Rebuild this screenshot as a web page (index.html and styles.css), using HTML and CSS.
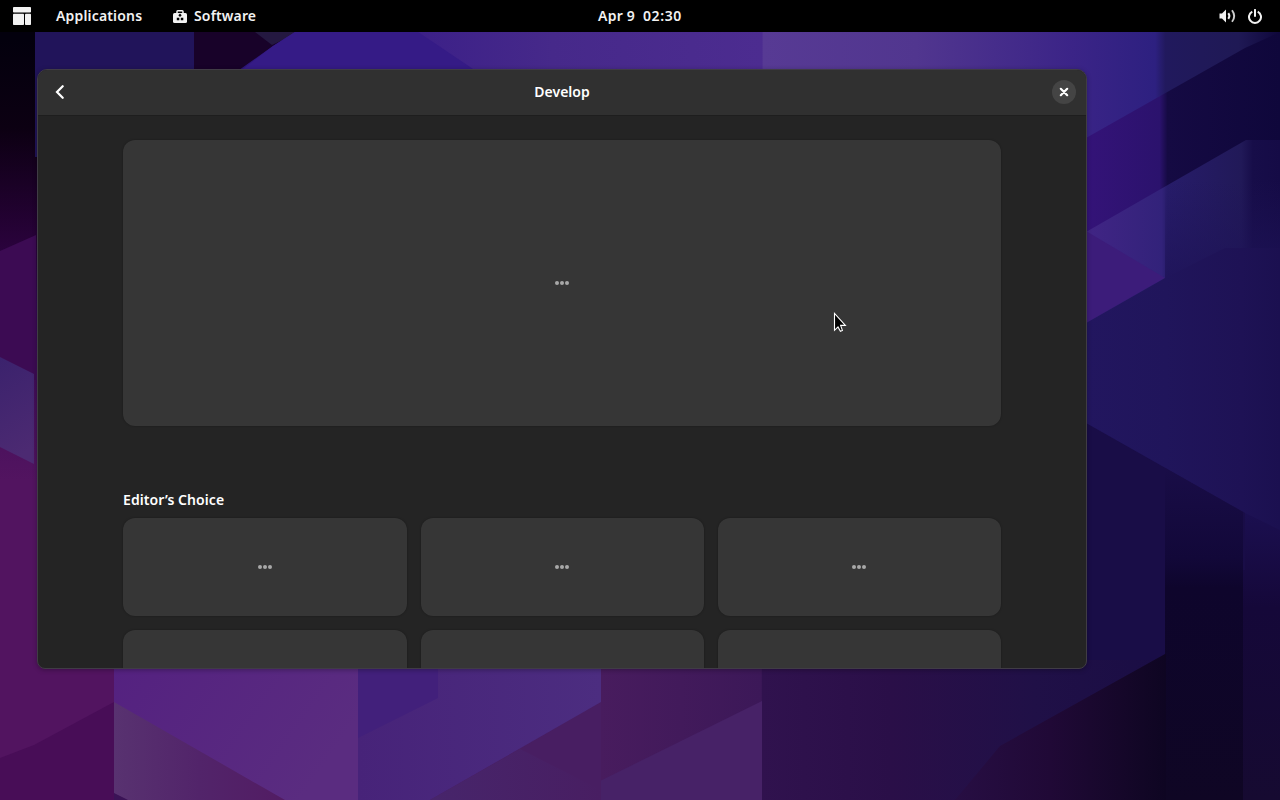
FILE: index.html
```html
<!DOCTYPE html>
<html lang="en">
  <head>
    <meta charset="UTF-8" />
    <meta name="viewport" content="width=device-width, initial-scale=1.0" />
    <title>Software</title>
    <link rel="stylesheet" href="styles.css">
  </head>
  <body>
    <svg class="wallpaper" viewBox="0 0 1280 800" preserveAspectRatio="none">
      <defs>
        <linearGradient id="left" x1="0" y1="0" x2="0" y2="1">
          <stop offset="0.05" stop-color="#03000d" />
          <stop offset="0.16" stop-color="#0c0012" />
          <stop offset="0.3" stop-color="#280239" />
          <stop offset="0.38" stop-color="#350854" />
          <stop offset="0.6" stop-color="#521460" />
          <stop offset="1" stop-color="#521460" />
        </linearGradient>
        <linearGradient id="top" gradientUnits="userSpaceOnUse" x1="240" y1="0" x2="1280" y2="0">
          <stop offset="0" stop-color="#2d1578" />
          <stop offset="0.17" stop-color="#3c2088" />
          <stop offset="0.3" stop-color="#46298a" />
          <stop offset="0.502" stop-color="#4c2c90" />
          <stop offset="0.503" stop-color="#573a94" />
          <stop offset="0.65" stop-color="#51368f" />
          <stop offset="0.8" stop-color="#3b2487" />
          <stop offset="0.88" stop-color="#2d2080" />
          <stop offset="0.89" stop-color="#21195d" />
          <stop offset="0.96" stop-color="#1f1955" />
          <stop offset="1" stop-color="#0f073b" />
        </linearGradient>
        <linearGradient id="slope" x1="0" y1="0" x2="1" y2="0">
          <stop offset="0" stop-color="#341378" />
          <stop offset="0.38" stop-color="#2b126d" />
          <stop offset="0.42" stop-color="#150a43" />
          <stop offset="1" stop-color="#0f073b" />
        </linearGradient>
        <linearGradient id="band" x1="0" y1="0" x2="1" y2="0">
          <stop offset="0" stop-color="#412585" />
          <stop offset="0.39" stop-color="#32227a" />
          <stop offset="0.42" stop-color="#271c6a" />
          <stop offset="0.8" stop-color="#211958" />
          <stop offset="0.86" stop-color="#170d49" />
          <stop offset="1" stop-color="#150b46" />
        </linearGradient>
        <linearGradient id="middle" x1="0" y1="0" x2="1" y2="0">
          <stop offset="0" stop-color="#22165f" />
          <stop offset="0.41" stop-color="#20155b" />
          <stop offset="0.8" stop-color="#1e1255" />
          <stop offset="1" stop-color="#1b1050" />
        </linearGradient>
        <linearGradient id="fade" x1="0" y1="0" x2="0" y2="1">
          <stop offset="0" stop-color="#1e1357" stop-opacity="0" />
          <stop offset="1" stop-color="#1e1357" stop-opacity="0.8" />
        </linearGradient>
        <linearGradient id="right" x1="0" y1="0" x2="0" y2="1">
          <stop offset="0" stop-color="#22165e" />
          <stop offset="0.4" stop-color="#1b0f50" />
          <stop offset="0.6" stop-color="#150839" />
          <stop offset="1" stop-color="#160a31" />
        </linearGradient>
        <linearGradient id="lower" gradientUnits="userSpaceOnUse" x1="600" y1="0" x2="1180" y2="0">
          <stop offset="0" stop-color="#481c5e" />
          <stop offset="0.278" stop-color="#3c1858" />
          <stop offset="0.28" stop-color="#30124e" />
          <stop offset="0.5" stop-color="#2a0f48" />
          <stop offset="0.75" stop-color="#201047" />
          <stop offset="1" stop-color="#190d44" />
        </linearGradient>
        <linearGradient id="corner" x1="0" y1="0" x2="1" y2="0">
          <stop offset="0" stop-color="#270e43" />
          <stop offset="0.45" stop-color="#200936" />
          <stop offset="0.8" stop-color="#150729" />
          <stop offset="1" stop-color="#0e0522" />
        </linearGradient>
        <linearGradient id="shine" x1="0" y1="0" x2="1" y2="0">
          <stop offset="0" stop-color="#583270" />
          <stop offset="0.5" stop-color="#52246a" />
          <stop offset="1" stop-color="#521c63" />
        </linearGradient>
        <linearGradient id="violet" x1="0" y1="0" x2="1" y2="0.4">
          <stop offset="0" stop-color="#542180" />
          <stop offset="1" stop-color="#5a2c80" />
        </linearGradient>
        <linearGradient id="blue" x1="0" y1="0" x2="1" y2="0">
          <stop offset="0" stop-color="#472379" />
          <stop offset="1" stop-color="#4c2d80" />
        </linearGradient>
        <linearGradient id="pillar" x1="0" y1="0" x2="0" y2="1">
          <stop offset="0" stop-color="#190d47" />
          <stop offset="0.27" stop-color="#120839" />
          <stop offset="0.36" stop-color="#0e052c" />
          <stop offset="1" stop-color="#0f0624" />
        </linearGradient>
        <linearGradient id="haze" x1="0" y1="0" x2="0.2" y2="1">
          <stop offset="0" stop-color="#3b226d" />
          <stop offset="1" stop-color="#4c2a72" />
        </linearGradient>
        <linearGradient id="wedge" x1="0" y1="0" x2="1" y2="0">
          <stop offset="0" stop-color="#47256b" />
          <stop offset="1" stop-color="#481e62" />
        </linearGradient>
      </defs>
      <rect width="1280" height="800" fill="url(#left)" />

      <polygon points="0,251 36,235 36,380 0,380" fill="#3c0b53" />
      <polygon points="0,357 34,374 34,464 0,447" fill="url(#haze)" />
      <rect x="35" y="32" width="160" height="125" fill="#21145a" />
      <rect x="194" y="32" width="90" height="50" fill="#180229" />
      <polygon points="255,32 300,32 272,45" fill="#241840" />

      <polygon points="295,32 1280,32 1280,140 1080,140 1080,80 225,80 273,46" fill="url(#top)" />
      <polygon points="295,32 418,32 482,75 235,75 273,46" fill="#351b86" />
      <polygon points="1245,48 1280,32 1280,200 1086,245 1086,138" fill="url(#slope)" />
      <rect x="1086" y="320" width="194" height="480" fill="url(#right)" />
      <polygon points="1086,232 1246,140 1280,140 1280,330 1086,330" fill="url(#band)" />
      <polygon points="1086,231 1165,278 1086,323" fill="#3c1c7a" />
      <rect x="1165" y="180" width="115" height="100" fill="url(#fade)" />
      <polygon points="1086,323 1165,278 1225,248 1280,248 1280,530 1245,513 1086,425" fill="url(#middle)" />

      <polygon points="1086,423 1245,513 1245,570 1165,570 1165,670 1086,690" fill="#190d47" />
      <polygon points="1165,560 1165,468 1243,512 1243,800 1165,800" fill="url(#pillar)" />

      <rect x="600" y="660" width="565" height="140" fill="url(#lower)" />
      <polygon points="955,800 1000,746 1165,654 1166,654 1166,800" fill="url(#corner)" />
      <polygon points="600,781 762,701 762,800 600,800" fill="#472267" />

      <rect x="114" y="660" width="246" height="140" fill="url(#violet)" />
      <rect x="358" y="660" width="243" height="140" fill="url(#blue)" />
      <polygon points="358,660 438,660 438,698 358,738" fill="#42207b" />
      <polygon points="601,702 601,800 430,800" fill="#481e62" />
      <polygon points="430,800 520,749 601,790 601,800" fill="url(#wedge)" />
      <polygon points="114,702 285,800 114,800" fill="url(#shine)" />
      <polygon points="0,758 34,745 114,702 114,800 0,800" fill="#480d57" />
      <polygon points="114,793 128,800 114,800" fill="#3b1356" />
    </svg>

    <header class="topbar">
      <div class="topbar-left">
        <svg class="grid-icon" width="18" height="18" viewBox="0 0 18 18" fill="#f2f2f2">
          <rect width="18" height="5.500" rx="0.800" />
          <rect y="6.700" width="11" height="11.300" rx="0.800" />
          <rect x="12" y="6.700" width="6" height="11.300" rx="0.800" />
        </svg>
        <span class="menu-apps">Applications</span>
        <svg class="bag-icon" width="14" height="13" viewBox="0 0 14 13">
          <path d="M4 3.500V1.600a0.800 0.800 0 0 1 0.800-0.800h4.400a0.800 0.800 0 0 1 0.800 0.800v1.900" fill="none" stroke="#f2f2f2" stroke-width="1.500" />
          <rect y="3" width="14" height="10" rx="1.500" fill="#f2f2f2" />
          <path d="M7 3.500l1.700 1.700L7 6.900 5.300 5.200zM3.800 7.700h2.500v2.600H3.800zM7.800 7.700h2.500v2.600H7.800z" fill="#000" />
        </svg>
        <span class="menu-software">Software</span>
      </div>
      <div class="clock"><span>Apr 9</span><span>02:30</span></div>
      <div class="topbar-right">
        <svg width="17" height="14" viewBox="0 0 17 14" fill="none" stroke="#f2f2f2">
          <path d="M0.500 4.500H3L7 0.500v13L3 9.500H0.500z" fill="#f2f2f2" stroke="none" />
          <path d="M9.300 4.200q2.200 2.800 0 5.600" stroke-width="2" />
          <path d="M13 1.200q4.400 5.800 0 11.600" stroke-width="1.900" opacity="0.850" />
        </svg>
        <svg width="14" height="15" viewBox="0 0 14 15" fill="none" stroke="#f2f2f2" stroke-width="2">
          <path d="M4.300 2.600A6 6 0 1 0 9.700 2.600" />
          <path d="M7 0.900v6" stroke-linecap="round" />
        </svg>
      </div>
    </header>

    <main class="window">
      <div class="headerbar">
        <svg class="back" width="10" height="14" viewBox="0 0 10 14" fill="none" stroke="#fff" stroke-width="2.200" stroke-linecap="round">
          <path d="M7.700 1.200L2 7l5.700 5.800" />
        </svg>
        <h1>Develop</h1>
        <button class="close" aria-label="Close">
          <svg width="10" height="10" viewBox="0 0 10 10" stroke="#fff" stroke-width="2.200" stroke-linecap="round">
            <path d="M1.800 1.800l6.400 6.400M8.200 1.800L1.800 8.200" />
          </svg>
        </button>
      </div>
      <div class="content">
        <div class="card banner"><span class="dots"><i></i><i></i><i></i></span></div>
        <h2>Editor’s Choice</h2>
        <div class="tiles">
          <div class="card"><span class="dots"><i></i><i></i><i></i></span></div>
          <div class="card"><span class="dots"><i></i><i></i><i></i></span></div>
          <div class="card"><span class="dots"><i></i><i></i><i></i></span></div>
          <div class="card"></div>
          <div class="card"></div>
          <div class="card"></div>
        </div>
      </div>
    </main>

    <svg class="cursor" width="14" height="21" viewBox="0 0 14 21">
      <path d="M1.500 1.500v16.800l3.500-3.400L7.400 19.300 9.400 18.400 7.600 13.400h4.800z" fill="#000" stroke="#fff" stroke-width="1.100" />
    </svg>
  </body>
</html>
```

FILE: styles.css
```css
* {
  box-sizing: border-box;
}
body {
  margin: 0;
  height: 100vh;
  overflow: hidden;
  background: #1d1050;
  color: #fff;
  font-family: "Noto Sans", "Open Sans", sans-serif;
  font-size: 14px;
  font-weight: 600;
}
h1,
h2 {
  margin: 0;
  font-size: 14px;
  font-weight: 600;
}
.wallpaper {
  position: absolute;
  top: 0;
  left: 0;
  z-index: -1;
  width: 100%;
  height: 100%;
}

/* top panel */
.topbar {
  display: grid;
  grid-template-columns: 1fr auto 1fr;
  align-items: center;
  height: 32px;
  padding: 0 18px 0 13px;
  background: #000;
  color: #f2f2f2;
}
.topbar-left,
.topbar-right {
  display: flex;
  align-items: center;
}
.topbar-right {
  justify-content: flex-end;
  gap: 12px;
}
.topbar span {
  padding-bottom: 2px;
}
.menu-apps {
  width: 86px;
  margin: 0 31px 0 25px;
  letter-spacing: 0.17px;
}
.menu-software {
  margin-left: 7px;
  letter-spacing: 0.15px;
}
.clock {
  display: flex;
  gap: 8px;
  padding-left: 5px;
  letter-spacing: 0.6px;
}
.clock span:first-child {
  letter-spacing: 0.2px;
}

/* software window */
.window {
  display: flex;
  flex-direction: column;
  width: 1050px;
  height: 600px;
  margin: 37px 0 0 37px;
  overflow: hidden;
  border: 1px solid #403c45;
  border-radius: 10px 10px 8px 8px;
  background: #242424;
  box-shadow: 0 1px 5px rgba(0, 0, 0, 0.3);
}
.headerbar {
  display: grid;
  grid-template-columns: 1fr auto 1fr;
  flex: none;
  align-items: center;
  height: 46px;
  padding: 0 10px 1px 17px;
  border-bottom: 1px solid #1e1e1e;
  background: #303030;
}
.headerbar h1 {
  padding: 0 7px 1px 0;
}
.close {
  display: flex;
  align-items: center;
  justify-content: center;
  justify-self: end;
  width: 24px;
  height: 24px;
  padding: 0;
  border: 0;
  border-radius: 50%;
  background: #444;
}
.content {
  padding: 24px 85px 0;
}
.card {
  display: flex;
  align-items: center;
  justify-content: center;
  height: 98px;
  border-radius: 12px;
  background: #363636;
  box-shadow: 0 0 2px rgba(0, 0, 0, 0.35);
}
.banner {
  height: 286px;
  margin-bottom: 64px;
}
.content h2 {
  height: 20px;
  margin-bottom: 8px;
  line-height: 20px;
  letter-spacing: 0.07px;
}
.tiles {
  display: grid;
  grid-template-columns: 284px 283px 283px;
  gap: 14px;
}
.tiles .dots {
  margin-right: 1px;
}
.dots {
  display: flex;
  gap: 1px;
}
.dots i {
  width: 4px;
  height: 4px;
  border-radius: 50%;
  background: #a8a8a8;
}

.cursor {
  position: absolute;
  top: 312px;
  left: 833px;
}
```
